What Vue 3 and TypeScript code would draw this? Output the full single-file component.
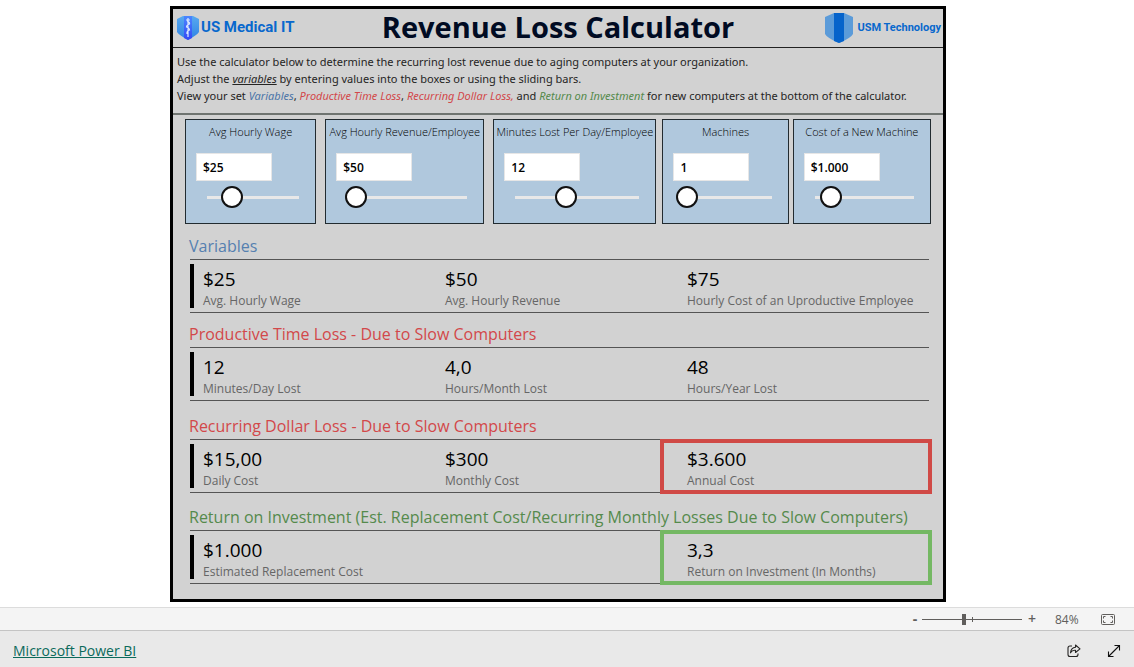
<script setup lang="ts">
import { computed, reactive, ref } from 'vue'

type Key = 'wage' | 'revenue' | 'minutes' | 'machines' | 'cost'

interface Slicer {
  key: Key
  label: string
  min: number
  max: number
  money: boolean
}

interface Section {
  id: string
  title: string
  cells: { value: string; label: string; mark?: string }[]
}

const slicers: Slicer[] = [
  { key: 'wage', label: 'Avg Hourly Wage', min: 0, max: 100, money: true },
  { key: 'revenue', label: 'Avg Hourly Revenue/Employee', min: 0, max: 1000, money: true },
  { key: 'minutes', label: 'Minutes Lost Per Day/Employee', min: 0, max: 30, money: false },
  { key: 'machines', label: 'Machines', min: 1, max: 100, money: false },
  { key: 'cost', label: 'Cost of a New Machine', min: 0, max: 7000, money: true },
]

const values = reactive<Record<Key, number>>({ wage: 25, revenue: 50, minutes: 12, machines: 1, cost: 1000 })
const zoom = ref(84)

function format(n: number, digits = 0): string {
  const [whole, part] = n.toFixed(digits).split('.')
  const grouped = whole.replace(/\B(?=(\d{3})+$)/g, '.')
  return part ? `${grouped},${part}` : grouped
}
const dollars = (n: number, digits = 0) => '$' + format(n, digits)
const shown = (s: Slicer) => (s.money ? dollars(values[s.key]) : format(values[s.key]))

function enter(s: Slicer, event: Event) {
  const n = Number((event.target as HTMLInputElement).value.replace(/\D/g, ''))
  values[s.key] = Math.min(s.max, Math.max(s.min, n))
}

const sections = computed<Section[]>(() => {
  const hourly = values.wage + values.revenue
  const month = (values.minutes * values.machines * 20) / 60
  const daily = (hourly * values.minutes * values.machines) / 60
  const replacement = values.cost * values.machines
  return [
    {
      id: 'variables',
      title: 'Variables',
      cells: [
        { value: dollars(values.wage), label: 'Avg. Hourly Wage' },
        { value: dollars(values.revenue), label: 'Avg. Hourly Revenue' },
        { value: dollars(hourly), label: 'Hourly Cost of an Uproductive Employee' },
      ],
    },
    {
      id: 'time',
      title: 'Productive Time Loss - Due to Slow Computers',
      cells: [
        { value: format(values.minutes * values.machines), label: 'Minutes/Day Lost' },
        { value: format(month, 1), label: 'Hours/Month Lost' },
        { value: format(month * 12), label: 'Hours/Year Lost' },
      ],
    },
    {
      id: 'dollar',
      title: 'Recurring Dollar Loss - Due to Slow Computers',
      cells: [
        { value: dollars(daily, 2), label: 'Daily Cost' },
        { value: dollars(daily * 20), label: 'Monthly Cost' },
        { value: dollars(daily * 240), label: 'Annual Cost', mark: 'red' },
      ],
    },
    {
      id: 'roi',
      title: 'Return on Investment (Est. Replacement Cost/Recurring Monthly Losses Due to Slow Computers)',
      cells: [
        { value: dollars(replacement), label: 'Estimated Replacement Cost' },
        { value: format(daily ? replacement / (daily * 20) : 0, 1), label: 'Return on Investment (In Months)', mark: 'green' },
      ],
    },
  ]
})
</script>

<template>
  <div class="page">
    <main class="stage">
      <article class="report">
        <header class="top">
          <div class="brand">
            <svg class="medical" viewBox="0 0 24 26" aria-hidden="true">
              <defs>
                <linearGradient id="side" x1="0" y1="0" x2="0" y2="1">
                  <stop offset="0" stop-color="#58a9f0" />
                  <stop offset="1" stop-color="#2f83e4" />
                </linearGradient>
                <linearGradient id="core" x1="0" y1="0" x2="0" y2="1">
                  <stop offset="0" stop-color="#4a86ff" />
                  <stop offset="1" stop-color="#3548f5" />
                </linearGradient>
              </defs>
              <path d="M1 4 L7 1 H17 L23 4 V17 Q21 20 12 25 Q3 20 1 17 Z" fill="url(#side)" />
              <path d="M8 1 H16 V23 L12 25 L8 23 Z" fill="url(#core)" />
              <path d="M12 3 V22 M10 5 H14 M11 6 Q14 7 13.500 9 Q10.500 10 10.500 12 Q13.500 13 13.500 15 Q10.500 16 11 19" fill="none" stroke="#dce9ff" stroke-width="1.2" />
            </svg>
            <span class="name">US Medical IT</span>
          </div>
          <h1>Revenue Loss Calculator</h1>
          <div class="brand right">
            <svg class="usm" viewBox="0 0 30 30" aria-hidden="true">
              <path d="M1 4 L10 0 H20 L29 4 V21 Q27 25 15 30 Q3 25 1 21 Z" fill="#5b9bd9" />
              <path d="M10 0 H20 V28 L15 30 L10 28 Z" fill="#0563cb" />
            </svg>
            <span class="name small">USM Technology</span>
          </div>
        </header>

        <section class="intro">
          <p class="lead">Use the calculator below to determine the recurring lost revenue due to aging computers at your organization.</p>
          <p>Adjust the <u><i>variables</i></u> by entering values into the boxes or using the sliding bars.</p>
          <p>
            View your set <i class="blue">Variables</i>, <i class="red">Productive Time Loss</i>,
            <i class="red">Recurring Dollar Loss,</i> and <i class="green">Return on Investment</i> for new computers at the
            bottom of the calculator.
          </p>
        </section>

        <section class="slicers">
          <div v-for="s in slicers" :key="s.key" class="slicer" :class="s.key">
            <label :for="s.key">{{ s.label }}</label>
            <input :id="s.key" class="entry" type="text" :value="shown(s)" @change="enter(s, $event)" />
            <input v-model.number="values[s.key]" class="range" type="range" :min="s.min" :max="s.max" :aria-label="s.label" />
          </div>
        </section>

        <section v-for="sec in sections" :key="sec.id" class="block" :class="sec.id">
          <h2>{{ sec.title }}</h2>
          <div class="row">
            <div v-for="c in sec.cells" :key="c.label" class="cell" :class="c.mark">
              <strong>{{ c.value }}</strong>
              <span>{{ c.label }}</span>
            </div>
          </div>
        </section>
      </article>
    </main>

    <div class="zoombar">
      <button class="step minus" type="button" aria-label="Zoom out" @click="zoom -= 10">-</button>
      <input v-model.number="zoom" class="zoomrange" type="range" min="0" max="200" aria-label="Zoom" />
      <button class="step" type="button" aria-label="Zoom in" @click="zoom += 10">+</button>
      <span class="percent">{{ zoom }}%</span>
      <button class="fit" type="button" aria-label="Fit to page">
        <svg viewBox="0 0 14 11" fill="none" stroke="#605e5c" aria-hidden="true">
          <rect x="0.5" y="0.5" width="13" height="10" rx="1" />
          <path d="M2.500 4.500 V2.500 H4.500 M9.500 2.500 H11.500 V4.500 M11.500 6.500 V8.500 H9.500 M4.500 8.500 H2.500 V6.500" />
        </svg>
      </button>
    </div>

    <footer class="foot">
      <a href="#">Microsoft Power BI</a>
      <div class="actions">
        <button type="button" aria-label="Share">
          <svg viewBox="0 0 14 14" fill="none" stroke="#252423" stroke-width="1.1" stroke-linejoin="round" aria-hidden="true">
            <path d="M5 2 H3 Q1 2 1 4 V10.500 Q1 12.500 3 12.500 H9 Q11 12.500 11 10.500 V9.500" />
            <path d="M8.500 1 L13 4.800 L8.500 8.500 V6.300 Q5 6 3.500 8.800 Q4 3.500 8.500 3.200 Z" />
          </svg>
        </button>
        <button type="button" aria-label="Full screen">
          <svg viewBox="0 0 14 14" fill="none" stroke="#111" stroke-width="1.1" aria-hidden="true">
            <path d="M1.500 12.500 L12.500 1.500 M7.500 1.500 H12.500 V6.500 M1.500 7.500 V12.500 H6.500" />
          </svg>
        </button>
      </div>
    </footer>
  </div>
</template>

<style>
body {
  margin: 0;
}
</style>

<style scoped>
* {
  box-sizing: border-box;
}
.page {
  min-height: 100vh;
  display: flex;
  flex-direction: column;
  background: #fff;
  font-family: 'Open Sans', 'Noto Sans', sans-serif;
  color: #252423;
}
h1,
h2,
p {
  margin: 0;
  font-weight: 400;
}
button {
  padding: 0;
  border: 0;
  background: none;
  font: inherit;
  color: inherit;
}
svg {
  display: block;
}
.stage {
  flex: 1;
  padding: 6px 18px 5px 0;
}
.report {
  max-width: 776px;
  margin: 0 auto;
  border: 3px solid #000;
  background: #d2d2d2;
  padding-bottom: 15px;
}
.top {
  height: 39px;
  display: grid;
  grid-template-columns: 1fr auto 1fr;
  align-items: center;
  border-bottom: 1px solid #222;
}
h1 {
  font-size: 29px;
  line-height: 34px;
  padding-bottom: 2px;
  font-weight: 700;
  color: #000b23;
}
.brand {
  display: flex;
  align-items: center;
  gap: 1px;
  padding: 0 3px;
}
.right {
  justify-content: flex-end;
  gap: 3px;
  padding: 0 2px;
}
.medical {
  width: 24px;
  height: 26px;
}
.usm {
  width: 30px;
  height: 30px;
}
.name {
  font-family: Roboto, 'Liberation Sans', sans-serif;
  font-weight: 700;
  font-size: 15px;
  line-height: 18px;
  padding-bottom: 2px;
  color: #0868cd;
  white-space: nowrap;
}
.small {
  font-size: 11px;
  padding-bottom: 0;
}
.intro {
  padding: 5px 4px 9px;
  border-bottom: 2px solid #6f7470;
  font-family: 'Noto Sans', 'Open Sans', sans-serif;
  font-size: 11px;
  line-height: 17px;
  white-space: nowrap;
}
.blue {
  color: #4a74a8;
}
.red {
  color: #d2484a;
}
.green {
  color: #558a4c;
}
.slicers {
  display: grid;
  grid-template-columns: 137fr 165fr 166fr 127fr 139fr;
  gap: 4px;
  padding: 4px 12px 0;
}
.slicer {
  min-width: 0;
  display: flex;
  flex-direction: column;
  border: 1px solid #222b30;
  background: #b0c8dd;
  padding: 3px 8px 15px 10px;
}
.wage,
.revenue {
  margin-right: 5px;
}
.minutes {
  margin-right: 2px;
}
.slicer label {
  margin: 0 -8px 0 -10px;
  text-align: center;
  font-size: 11px;
  line-height: 18px;
  font-weight: 300;
  color: #000;
  white-space: nowrap;
}
.entry {
  width: 76px;
  height: 28px;
  margin-top: 12px;
  padding: 0 0 0 6px;
  border: 1px solid #e6e6e6;
  background: #fff;
  font: 600 12px 'Open Sans', sans-serif;
  color: #000;
}
.range {
  appearance: none;
  height: 22px;
  margin: 5px 0 0 3px;
  background: none;
}
.range::-webkit-slider-runnable-track {
  height: 22px;
  background: linear-gradient(#e8e8e8, #e8e8e8) center / calc(100% - 16px) 3px no-repeat;
}
.range::-webkit-slider-thumb {
  appearance: none;
  width: 22px;
  height: 22px;
  border: 2px solid #111;
  border-radius: 50%;
  background: #fff;
}
.block {
  padding: 0 14px 0 17px;
}
.variables {
  padding-top: 10px;
}
.time {
  padding-top: 9px;
}
.dollar {
  padding-top: 13px;
}
.roi {
  padding-top: 12px;
}
h2 {
  height: 25px;
  font-size: 16px;
  line-height: 25px;
  white-space: nowrap;
  margin-left: -1px;
}
.variables h2 {
  color: #5580b0;
}
.time h2,
.dollar h2 {
  color: #d2484a;
}
.roi h2 {
  color: #558a4c;
}
.row {
  display: grid;
  grid-template-columns: repeat(3, 1fr);
  border-top: 1px solid #555;
  border-bottom: 1px solid #555;
  background: linear-gradient(#000, #000) 0 4px / 4px 44px no-repeat;
  padding: 4px 0 4px 13px;
}
.cell {
  position: relative;
  height: 44px;
  padding-top: 2px;
}
.cell strong,
.cell span {
  display: block;
  white-space: nowrap;
}
.cell strong {
  font-size: 19px;
  line-height: 26px;
  font-weight: 400;
  color: #000;
}
.cell span {
  font-size: 12px;
  line-height: 18px;
  color: #666;
}
.red.cell::after,
.green.cell::after {
  content: '';
  position: absolute;
  inset: -5px -3px -6px -27px;
  border: 4px solid #d04a46;
}
.green.cell::after {
  border-color: #74b863;
}
.green.cell {
  grid-column: 3;
}
.zoombar {
  height: 24px;
  display: flex;
  align-items: center;
  justify-content: flex-end;
  padding-right: 19px;
  border-top: 1px solid #dcdcdc;
  border-bottom: 1px solid #c4c4c4;
  background: #f4f4f4;
  font-size: 12px;
  color: #605e5c;
}
.step {
  width: 14px;
  font-size: 14px;
  line-height: 20px;
  font-weight: 600;
}
.minus {
  width: 8px;
  font-weight: 700;
}
.zoomrange {
  appearance: none;
  width: 100px;
  height: 12px;
  margin: 0 3px;
  background: linear-gradient(#605e5c, #605e5c) 50% 50% / 1px 5px no-repeat, linear-gradient(#605e5c, #605e5c) center / 100% 1px no-repeat;
}
.zoomrange::-webkit-slider-thumb {
  appearance: none;
  width: 4px;
  height: 11px;
  background: #605e5c;
}
.percent {
  width: 42px;
  padding-left: 16px;
}
.fit {
  margin-left: 20px;
}
.fit svg {
  width: 14px;
  height: 11px;
}
.foot {
  height: 36px;
  display: flex;
  align-items: center;
  justify-content: space-between;
  padding: 4px 13px 0;
  background: #e9e9e9;
}
.foot a {
  color: #0b6a5b;
  font-size: 14px;
  line-height: 18px;
}
.actions {
  display: flex;
  gap: 26px;
}
.actions svg {
  width: 14px;
  height: 14px;
}
</style>
